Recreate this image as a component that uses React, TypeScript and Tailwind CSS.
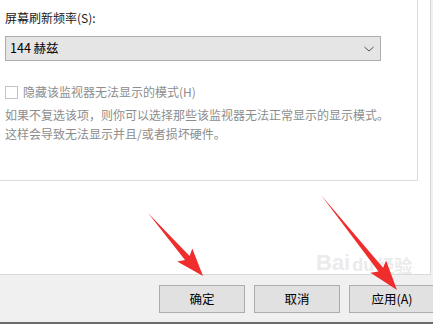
export default function App() {
  return (
    <div
      className="relative w-[433px] h-[324px] overflow-hidden bg-[#f0f0f0] flex flex-col text-[12px]"
      style={{ fontFamily: '"Noto Sans CJK SC", "Noto Sans", sans-serif' }}
    >
      {/* Tab page */}
      <div className="w-[431px] h-[275px] shrink-0 bg-white border-r border-b border-[#d9d9d9]">
        <div className="w-[418px] h-[181px] border-r border-b border-[#dcdcdc] pl-[5px] pt-[9px]">
          <div className="text-[#1a1a1a] leading-[18px]">屏幕刷新频率(S):</div>
          <div className="mt-[9px] w-[376px] h-[25px] bg-[#e5e5e5] border border-[#adadad] flex items-center justify-between pl-[4px] pr-[4px]">
            <span className="text-black text-[12.5px]">144 赫兹</span>
            <svg width="12" height="8" viewBox="0 0 12 8" className="mr-[1px]">
              <path d="M1.5 2 L6 6 L10.5 2" fill="none" stroke="#555" strokeWidth="1" />
            </svg>
          </div>
          <div className="mt-[23px] flex items-center gap-[5px]">
            <div className="w-[13px] h-[13px] border border-[#c4c4c4] bg-white" />
            <span className="text-[#8d8d8d] leading-[16px]">隐藏该监视器无法显示的模式(H)</span>
          </div>
          <div className="mt-[5px] text-[#8d8d8d] leading-[19px]">
            <div>如果不复选该项，则你可以选择那些该监视器无法正常显示的显示模式。</div>
            <div>这样会导致无法显示并且/或者损坏硬件。</div>
          </div>
        </div>
      </div>

      {/* Buttons */}
      <div className="flex-1 flex pl-[159px] pt-[10px] gap-[9px]">
        <button className="w-[86px] h-[28px] shrink-0 bg-[#e1e1e1] border border-[#adadad] text-black text-[12.5px]">确定</button>
        <button className="w-[86px] h-[28px] shrink-0 bg-[#e1e1e1] border border-[#adadad] text-black text-[12.5px]">取消</button>
        <button className="w-[92px] h-[28px] shrink-0 bg-[#e1e1e1] border border-[#adadad] text-black text-[12.5px] pr-[6px]">应用(A)</button>
      </div>
      <div className="h-[2px] bg-[#6b6b6b] shrink-0" />

      {/* Watermark */}
      <div className="absolute left-[316px] top-[252px] flex items-end text-[#e2e2e2]/70 font-bold pointer-events-none">
        <span className="text-[22px] leading-none" style={{ fontFamily: '"Liberation Sans", sans-serif' }}>Bai</span>
        <span className="text-[18px] leading-none ml-[2px]" style={{ fontFamily: '"Liberation Sans", sans-serif' }}>du</span>
        <span className="text-[18px] leading-none ml-[2px]">经验</span>
      </div>

      {/* Red arrows */}
      <svg className="absolute left-0 top-0 pointer-events-none" width="433" height="324" viewBox="0 0 433 324">
        <polygon
          points="148,213 189.6,255.9 192.3,248.4 203,276 177.2,261.5 185,259.9"
          fill="#ef2d2d"
        />
        <polygon
          points="321,195 383.1,267.8 386.1,260.4 397,290 370.5,272.8 378.5,271.6"
          fill="#ef2d2d"
        />
      </svg>
    </div>
  );
}
